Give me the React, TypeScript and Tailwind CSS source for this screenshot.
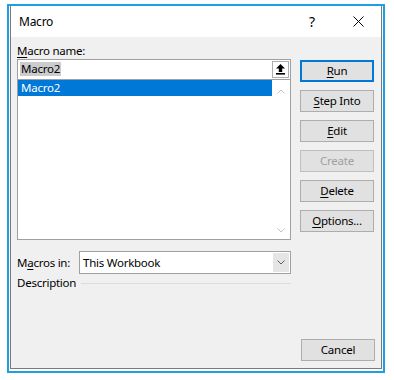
const font = { fontFamily: '"Noto Sans", "Open Sans", sans-serif' };

function Btn({
  children,
  primary,
  disabled,
}: {
  children: React.ReactNode;
  primary?: boolean;
  disabled?: boolean;
}) {
  const border = primary
    ? "border-2 border-[#0078d7]"
    : disabled
      ? "border border-[#bfbfbf]"
      : "border border-[#adadad]";
  return (
    <div
      className={`flex h-[22px] w-[74px] items-center justify-center bg-[#e1e1e1] leading-none ${border} ${
        disabled ? "text-[#a0a0a0]" : "text-black"
      }`}
    >
      {children}
    </div>
  );
}

function Key({ children }: { children: React.ReactNode }) {
  return <span className="underline underline-offset-[2px]">{children}</span>;
}

function Chevron({ up, color }: { up?: boolean; color: string }) {
  return (
    <svg width="8" height="5" viewBox="0 0 8 5">
      <path
        d={up ? "M0.5 4.5 L4 1 L7.5 4.5" : "M0.5 0.5 L4 4 L7.5 0.5"}
        fill="none"
        stroke={color}
        strokeWidth="1"
      />
    </svg>
  );
}

export default function App() {
  return (
    <div
      className="h-[380px] w-[394px] bg-white pl-[7px] pt-[4px] text-[11.5px] tracking-[-0.25px]"
      style={font}
    >
      <div className="h-[369px] w-[378px] border-2 border-[#1ba1e2] bg-white px-px pb-[2px]">
        <div className="flex h-full flex-col border-x border-b border-[#7a7a7a]">
          {/* title bar */}
          <div className="flex h-[31px] items-center bg-white pl-[8px]">
            <span className="text-[12px] text-black">Macro</span>
            <div className="ml-auto flex h-full">
              <div className="flex w-[46px] items-center justify-center text-[14px] text-black">?</div>
              <div className="flex w-[46px] items-center justify-center">
                <svg width="11" height="11" viewBox="0 0 11 11">
                  <path d="M0.5 0.5 L10.5 10.5 M10.5 0.5 L0.5 10.5" stroke="#000" strokeWidth="1" />
                </svg>
              </div>
            </div>
          </div>

          {/* body */}
          <div className="flex flex-1 flex-col bg-[#f0f0f0] px-[6px] pb-[7px]">
            <div className="flex gap-[9px] pt-[6px]">
              <div className="flex w-[274px] flex-col">
                <div className="h-[16px] leading-[16px] text-black">
                  <Key>M</Key>acro name:
                </div>
                <div className="flex h-[181px] flex-col border border-[#a0a0a0] bg-white">
                  <div className="flex h-[20px] items-start border-b border-[#a0a0a0]">
                    <span className="ml-[2px] mt-[2px] bg-[#cccccc] px-px leading-[14px] text-black">
                      Macro2
                    </span>
                    <div className="ml-auto mr-px mt-px flex h-[17px] w-[17px] items-center justify-center border border-[#adadad] bg-white">
                      <svg width="9" height="11" viewBox="0 0 9 11">
                        <path d="M4.5 0 L9 4.5 H6.2 V8 H2.8 V4.5 H0 Z" fill="#000" />
                        <rect x="0" y="9" width="9" height="1.6" fill="#000" />
                      </svg>
                    </div>
                  </div>
                  <div className="flex flex-1">
                    <div className="flex-1">
                      <div className="h-[16px] bg-[#0078d7] pl-[3px] leading-[16px] text-white">
                        Macro2
                      </div>
                    </div>
                    <div className="flex w-[18px] flex-col items-center justify-between pb-[6px] pt-[9px]">
                      <Chevron up color="#c2c2c2" />
                      <Chevron color="#c2c2c2" />
                    </div>
                  </div>
                </div>
              </div>

              <div className="mt-[17px] flex flex-col gap-[8px]">
                <Btn primary>
                  <Key>R</Key>un
                </Btn>
                <Btn>
                  <Key>S</Key>tep Into
                </Btn>
                <Btn>
                  <Key>E</Key>dit
                </Btn>
                <Btn disabled>Create</Btn>
                <Btn>
                  <Key>D</Key>elete
                </Btn>
                <Btn>
                  <Key>O</Key>ptions...
                </Btn>
              </div>
            </div>

            <div className="mt-[11px] flex w-[274px] items-center">
              <span className="w-[62px] text-black">
                M<Key>a</Key>cros in:
              </span>
              <div className="flex h-[23px] flex-1 items-center border border-[#a0a0a0] bg-white">
                <span className="pl-[3px] text-black">This Workbook</span>
                <div className="my-px ml-auto mr-px flex h-[19px] w-[16px] items-center justify-center bg-[#e5e5e5]">
                  <Chevron color="#606060" />
                </div>
              </div>
            </div>

            <div className="mt-px flex h-[16px] w-[274px] items-center">
              <span className="text-black">Description</span>
              <div className="ml-[5px] h-px flex-1 bg-[#dcdcdc]" />
            </div>

            <div className="mt-auto flex justify-end">
              <Btn>Cancel</Btn>
            </div>
          </div>
        </div>
      </div>
    </div>
  );
}
